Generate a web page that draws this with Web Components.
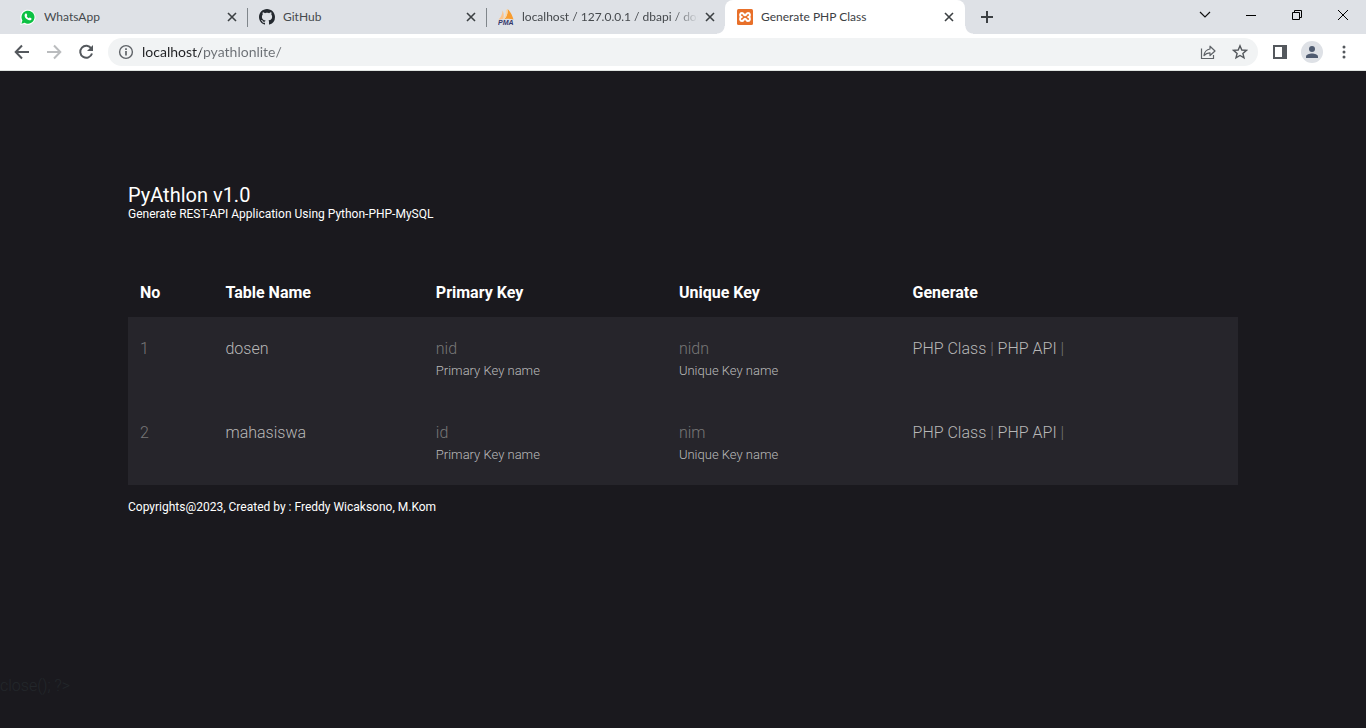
<!DOCTYPE html>
<html lang="en">
<head>
<meta charset="utf-8">
<meta name="viewport" content="width=device-width, initial-scale=1">
<title>Generate PHP Class</title>
<style>
  html, body { margin: 0; background: #1a191e; }
  body { font-family: Lato, "Open Sans", sans-serif; }
</style>
</head>
<body>
<browser-window></browser-window>

<script>
const define = (name, html, setup) => {
  const template = document.createElement('template');
  template.innerHTML = html;
  customElements.define(name, class extends HTMLElement {
    connectedCallback() {
      if (this.shadowRoot) return;
      const root = this.attachShadow({ mode: 'open' });
      root.append(template.content.cloneNode(true));
      if (setup) setup(this, root);
    }
  });
};

/* One tab: favicon slot, title, close button */
define('browser-tab', `
  <style>
    :host { display: flex; align-items: center; position: relative; flex: 0 1 239px; min-width: 0; box-sizing: border-box; height: 34px; padding: 0 7px 0 12px; color: #45494d; }
    :host([divider])::after { content: ""; position: absolute; right: -1px; top: 8px; width: 1px; height: 19px; background: #80868b; }
    :host([active]) { flex-basis: 240px; padding-right: 8px; background: #fff; border-radius: 8px 8px 0 0; color: #3c4043; }
    :host([active])::before, :host([active])::after { content: ""; position: absolute; bottom: 0; width: 8px; height: 8px; }
    :host([active])::before { left: -8px; background: radial-gradient(circle at 0 0, transparent 7px, #fff 8px); }
    :host([active])::after { right: -8px; background: radial-gradient(circle at 100% 0, transparent 7px, #fff 8px); }
    .icon { display: flex; width: 16px; height: 16px; flex: none; margin-right: 8px; }
    .title { flex: 1; min-width: 0; overflow: hidden; white-space: nowrap; font-size: 12px; line-height: 16px; }
    :host([fade]) .title { -webkit-mask-image: linear-gradient(to right, #000 calc(100% - 24px), transparent); mask-image: linear-gradient(to right, #000 calc(100% - 24px), transparent); }
    button { flex: none; display: flex; align-items: center; justify-content: center; width: 16px; height: 16px; margin-left: 4px; padding: 0; border: 0; background: none; }
  </style>
  <span class="icon"><slot name="icon"></slot></span>
  <span class="title"><slot></slot></span>
  <button type="button" aria-label="Close tab"><svg width="10" height="10" viewBox="0 0 10 10"><path d="M1 1l8 8M9 1l-8 8" stroke="#3c4043" stroke-width="1.600"/></svg></button>
`);

/* Icon button; its box is set by the bar that holds it */
define('icon-button', `
  <style>
    :host { display: flex; flex: none; width: 32px; height: 28px; }
    button { display: flex; align-items: center; justify-content: center; width: 100%; height: 100%; padding: 0; border: 0; background: none; }
  </style>
  <button type="button"><slot></slot></button>
`, (host, root) => root.querySelector('button').setAttribute('aria-label', host.getAttribute('label')));

define('tab-strip', `
  <style>
    :host { display: flex; height: 34px; padding-left: 8px; background: #dee1e6; }
    svg { display: block; }
    nav { display: flex; flex: 0 1 957px; min-width: 0; }
    .add { width: 28px; height: 34px; margin-left: 8px; }
    .controls { display: flex; margin-left: auto; }
    .controls icon-button { width: 46px; height: 29px; }
  </style>
  <nav aria-label="Tabs">
    <browser-tab divider>
      <svg slot="icon" width="16" height="16" viewBox="0 0 16 16"><path d="M.3 16L1.300 12A7.600 7.600 0 1 1 4.200 14.900z" fill="#fff"/><path d="M1.400 14.800l1-3.300a6.500 6.500 0 1 1 2.300 2.300z" fill="#0cc143"/><path d="M5.500 4.600c.4-.3.9-.2 1.100.2l.6 1.300c.1.3-.1.7-.5 1.100.5 1 1.200 1.600 2.200 2 .4-.5.7-.7 1-.6l1.300.6c.4.2.5.6.2 1.200-.5 1-1.700 1.200-3 .7C6.400 10.300 5.100 9 4.700 7.300c-.2-1.100 0-2.100.8-2.700z" fill="#fff"/></svg>
      WhatsApp</browser-tab>
    <browser-tab divider>
      <svg slot="icon" width="16" height="16" viewBox="0 0 16 16"><path fill="#24292f" d="M8 0C3.580 0 0 3.580 0 8c0 3.540 2.290 6.530 5.470 7.590.4.07.55-.17.55-.38 0-.19-.01-.82-.01-1.490-2.010.37-2.530-.49-2.690-.94-.09-.23-.48-.94-.82-1.130-.28-.15-.68-.52-.01-.53.63-.01 1.080.58 1.230.82.72 1.210 1.870.87 2.330.66.07-.52.28-.87.51-1.070-1.780-.2-3.640-.89-3.640-3.950 0-.87.31-1.590.82-2.150-.08-.2-.36-1.020.08-2.120 0 0 .67-.21 2.200.82.64-.18 1.320-.27 2-.27s1.360.09 2 .27c1.530-1.040 2.200-.82 2.200-.82.44 1.100.16 1.920.08 2.120.51.56.82 1.270.82 2.150 0 3.070-1.870 3.750-3.650 3.950.29.25.54.73.54 1.480 0 1.070-.01 1.930-.01 2.200 0 .21.15.46.55.38A8.010 8.010 0 0 0 16 8c0-4.420-3.580-8-8-8z"/></svg>
      GitHub</browser-tab>
    <browser-tab fade>
      <svg slot="icon" width="16" height="16" viewBox="0 0 16 16"><path d="M4.500 1.500C4.500 5 3 8.500.5 10.500c2 0 3.500-.3 4.800-.8C6 7 6 4 4.500 1.500z" fill="#fbc48d"/><path d="M9.500 0c.5 4-.5 7.500-3.200 10.200 3.200-.6 6-.6 9.200.3C14.500 7 12.800 2.500 9.500 0z" fill="#f89c2e"/><path d="M8 1C8 5 7 8 5 10l1.300.2C9 7.500 10 4 9.500 0z" fill="#fdd7a5"/><text x="0" y="15.500" font-family="Liberation Sans, sans-serif" font-size="7" font-weight="700" font-style="italic" fill="#34366b">PMA</text></svg>
      localhost / 127.0.0.1 / dbapi / dosen</browser-tab>
    <browser-tab active>
      <svg slot="icon" width="16" height="16" viewBox="0 0 16 16"><rect width="16" height="16" rx="1.500" fill="#e8702a"/><path d="M3.900 8C2.600 6.600 2.800 3.900 5 3.900c1.800 0 1.500 2.300 3 2.300s1.200-2.300 3-2.300c2.200 0 2.400 2.700 1.100 4.100 1.300 1.400 1.100 4.100-1.100 4.100-1.800 0-1.500-2.300-3-2.300s-1.200 2.300-3 2.300c-2.200 0-2.400-2.700-1.100-4.100z" fill="none" stroke="#fff" stroke-width="2"/><path d="M3.500 8h2M10.500 8h2" stroke="#fff" stroke-width="1.800"/></svg>
      Generate PHP Class</browser-tab>
  </nav>
  <icon-button class="add" label="New tab"><svg width="12" height="12" viewBox="0 0 12 12"><path d="M6 0v12M0 6h12" stroke="#3c4043" stroke-width="2"/></svg></icon-button>
  <div class="controls">
    <icon-button label="Search tabs"><svg width="12" height="8" viewBox="0 0 12 8"><path d="M1 1l5 5 5-5" fill="none" stroke="#111" stroke-width="1.200"/></svg></icon-button>
    <icon-button label="Minimize"><svg width="10" height="10" viewBox="0 0 10 10"><path d="M0 5.500h10" stroke="#000"/></svg></icon-button>
    <icon-button label="Restore"><svg width="10" height="10" viewBox="0 0 10 10"><path d="M.5 2.500h7v7h-7zM2.500 2.500v-2h7v7h-2" fill="none" stroke="#000"/></svg></icon-button>
    <icon-button label="Close window"><svg width="10" height="10" viewBox="0 0 10 10"><path d="M0 0l10 10M10 0L0 10" stroke="#000"/></svg></icon-button>
  </div>
`);

define('tool-bar', `
  <style>
    :host { display: flex; align-items: center; gap: 6px; height: 36px; padding: 0 6px; background: #fff; border-bottom: 1px solid #dfe3e0; }
    svg { display: block; }
    .group { display: flex; flex: none; }
    form { display: flex; align-items: center; flex: 1; min-width: 0; height: 28px; padding: 0 2px 0 10px; background: #f1f3f4; border-radius: 14px; }
    input {
      flex: 1; min-width: 0; height: 20px; margin: 0 0 0 8px; padding: 0; border: 0; outline: 0;
      font: 14px/20px Lato, "Open Sans", sans-serif; color: #5f6368;
      background: linear-gradient(to right, #202124 59px, #6b6f74 59px);
      -webkit-background-clip: text; background-clip: text; -webkit-text-fill-color: transparent;
    }
    .avatar { display: flex; width: 22px; height: 22px; border-radius: 50%; background: #dee1e6; }
  </style>
  <div class="group">
    <icon-button label="Back"><svg width="16" height="16" viewBox="0 0 16 16"><path d="M15 8H2M8 1.500L1.700 8 8 14.500" fill="none" stroke="#54585d" stroke-width="2"/></svg></icon-button>
    <icon-button label="Forward"><svg width="16" height="16" viewBox="0 0 16 16"><path d="M1 8h13M8 1.500L14.300 8 8 14.500" fill="none" stroke="#babcbe" stroke-width="2"/></svg></icon-button>
    <icon-button label="Reload"><svg width="16" height="16" viewBox="0 0 16 16"><path d="M13.300 4.500A6 6 0 1 0 14 9.500" fill="none" stroke="#54585d" stroke-width="2"/><path d="M15 1v6H9z" fill="#54585d"/></svg></icon-button>
  </div>
  <form>
    <svg width="16" height="16" viewBox="0 0 16 16" aria-hidden="true"><circle cx="8" cy="8" r="6.400" fill="none" stroke="#5f6368" stroke-width="1.400"/><path d="M8 7v4.500M8 4.300v1.700" stroke="#5f6368" stroke-width="1.700"/></svg>
    <input type="text" aria-label="Address" value="localhost/pyathlonlite/" spellcheck="false">
    <icon-button label="Share"><svg width="16" height="16" viewBox="0 0 16 16"><path d="M1.500 4.500v10h12v-3.500" fill="none" stroke="#5f6368" stroke-width="1.200"/><path d="M10 5V2.200L15 7l-5 4.500V8.800C7.500 8.700 5.800 9.500 4 11.500 4.500 8 6.500 5.500 10 5z" fill="none" stroke="#5f6368" stroke-width="1.200" stroke-linejoin="round"/></svg></icon-button>
    <icon-button label="Bookmark"><svg width="16" height="16" viewBox="0 0 16 16"><path d="M8 1.800l1.800 4.200 4.600.4-3.500 3 1.100 4.500L8 11.500l-4 2.400 1.100-4.500-3.500-3 4.600-.4z" fill="none" stroke="#54585d" stroke-width="1.400"/></svg></icon-button>
  </form>
  <div class="group">
    <icon-button label="Side panel"><svg width="14" height="14" viewBox="0 0 14 14"><path d="M0 0h14v14H0zM2 2v10h7V2z" fill="#54585d" fill-rule="evenodd"/></svg></icon-button>
    <icon-button label="Profile"><span class="avatar"><svg width="22" height="22" viewBox="0 0 22 22"><circle cx="11" cy="8" r="3" fill="#4f5b70"/><path d="M5 17v-1.500C5 13.500 8.500 12.500 11 12.500s6 1 6 3V17z" fill="#4f5b70"/></svg></span></icon-button>
    <icon-button label="Menu"><svg width="4" height="14" viewBox="0 0 4 14"><g fill="#54585d"><circle cx="2" cy="2" r="1.500"/><circle cx="2" cy="7" r="1.500"/><circle cx="2" cy="12" r="1.500"/></g></svg></icon-button>
  </div>
`);

define('key-table', `
  <style>
    :host { display: block; }
    table { width: 100%; table-layout: fixed; border-collapse: collapse; text-align: left; font-size: 16px; }
    th { padding: 12px; line-height: 24px; font-weight: 700; color: #fff; }
    td { padding: 21px 12px 19px; line-height: 22px; vertical-align: top; font-weight: 300; color: #777; background: #26252b; }
    small { display: block; font-size: 13px; color: #bbb; }
    a { color: #b8b8b8; text-decoration: none; }
    .name { color: #b8b8b8; }
    col:nth-child(1) { width: 7.700%; }
    col:nth-child(2) { width: 18.950%; }
    col:nth-child(3) { width: 21.900%; }
    col:nth-child(4) { width: 21.050%; }
  </style>
  <table>
    <colgroup><col><col><col><col><col></colgroup>
    <thead><tr><th scope="col">No</th><th scope="col">Table Name</th><th scope="col">Primary Key</th><th scope="col">Unique Key</th><th scope="col">Generate</th></tr></thead>
    <tbody></tbody>
  </table>
`, (host, root) => {
  const rows = [['dosen', 'nid', 'nidn'], ['mahasiswa', 'id', 'nim']];
  root.querySelector('tbody').innerHTML = rows.map(([name, primary, unique], i) => `
    <tr><td>${i + 1}</td><td class="name">${name}</td>
      <td>${primary}<small>Primary Key name</small></td>
      <td>${unique}<small>Unique Key name</small></td>
      <td><a href="#class-${name}">PHP Class</a> | <a href="#api-${name}">PHP API</a> |</td></tr>`).join('');
});

define('pyathlon-page', `
  <style>
    :host { display: block; font-family: Roboto, sans-serif; color: #fff; }
    main { box-sizing: border-box; max-width: 1140px; margin: 0 auto; padding: 112px 15px 0; }
    h1, p { margin: 0; font-weight: 400; }
    h1 { font-size: 20px; line-height: 24px; }
    p { font-size: 12px; line-height: 14px; }
    key-table { margin: 48px 0 15px; }
    .stray { margin-top: 160px; font-size: 16px; line-height: 24px; font-weight: 300; color: #23272b; }
  </style>
  <main>
    <h1>PyAthlon v1.0</h1>
    <p>Generate REST-API Application Using Python-PHP-MySQL</p>
    <key-table></key-table>
    <p>Copyrights@2023, Created by : Freddy Wicaksono, M.Kom</p>
  </main>
  <div class="stray">close(); ?&gt;</div>
`);

define('browser-window', `
  <style>:host { display: block; }</style>
  <tab-strip></tab-strip>
  <tool-bar></tool-bar>
  <pyathlon-page></pyathlon-page>
`);
</script>
</body>
</html>
